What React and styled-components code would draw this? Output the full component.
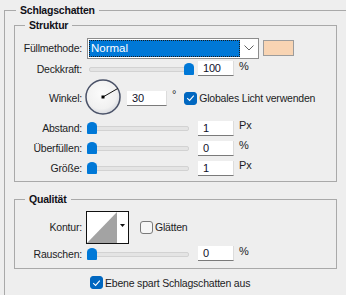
import React from "react";
import styled, { createGlobalStyle } from "styled-components";

const GlobalStyle = createGlobalStyle`
  html, body {
    margin: 0;
    padding: 0;
    background: #eeeeee;
  }
`;

const Page = styled.div`
  width: 346px;
  height: 295px;
  overflow: hidden;
  background: #eeeeee;
  padding-top: 4px;
  box-sizing: border-box;
  font-family: "Liberation Sans", Arial, sans-serif;
  font-size: 10.5px;
  letter-spacing: -0.2px;
  color: #1c1c24;
`;

const Outer = styled.fieldset`
  margin: 0 0 0 4px;
  padding: 1px 0 30px 9px;
  width: 400px;
  min-width: 0;
  box-sizing: border-box;
  border: 1px solid #a9a9a9;
`;

const Legend = styled.legend`
  margin-left: ${({ $offset }) => $offset}px;
  padding: 0 4px;
  font-weight: bold;
  font-size: 10.5px;
  line-height: 13px;
  color: #111118;
`;

const Group = styled.fieldset`
  margin: ${({ $top }) => $top}px 0 0 0;
  padding: ${({ $pt }) => $pt}px 0 ${({ $pb }) => $pb}px 0;
  width: 323px;
  min-width: 0;
  box-sizing: border-box;
  border: 1px solid #a9a9a9;
`;

const Row = styled.div`
  display: grid;
  grid-template-columns: 67px auto;
  column-gap: 5px;
  align-items: center;
  height: ${({ $h }) => $h}px;
`;

const Label = styled.div`
  text-align: right;
  white-space: nowrap;
`;

const Controls = styled.div`
  display: flex;
  align-items: center;
  height: 100%;
`;

const Select = styled.div`
  width: 172px;
  height: 21px;
  box-sizing: border-box;
  border: 1px solid #8c8c8c;
  background: #ffffff;
  padding: 1px;
  display: flex;
`;

const Highlight = styled.div`
  width: 151px;
  background: #0078d7;
  outline: 1px dotted #1a1a1a;
  outline-offset: -1px;
  color: #ffffff;
  font-size: 11.5px;
  letter-spacing: 0;
  display: flex;
  align-items: center;
  padding-left: 2px;
  box-sizing: border-box;
`;

const Chevron = styled.div`
  flex: 1;
  display: flex;
  align-items: center;
  justify-content: center;
`;

const Swatch = styled.div`
  width: 31px;
  height: 16px;
  box-sizing: border-box;
  margin-left: 4px;
  background: #f8d4b3;
  border: 1px solid #9c9c9c;
`;

const SliderBox = styled.div`
  position: relative;
  width: 106px;
  height: 14px;
  flex: none;
`;

const Groove = styled.div`
  position: absolute;
  left: 2px;
  right: 4px;
  top: 5px;
  height: 3px;
  background: #e4e4e4;
  border: 1px solid #d2d2d2;
  border-radius: 2px;
`;

const Thumb = styled.div`
  position: absolute;
  top: 1px;
  width: 10px;
  height: 12px;
  background: #0078d7;
  border-radius: 5px 5px 1px 1px / 4px 4px 1px 1px;
`;

const Field = styled.div`
  width: ${({ $w }) => $w}px;
  height: 15px;
  margin-left: ${({ $ml }) => $ml}px;
  box-sizing: border-box;
  background: #ffffff;
  border-bottom: 1px solid #7a7a7a;
  border-right: 1px solid #dcdcdc;
  padding-left: 5px;
  display: flex;
  align-items: center;
  color: #10102a;
  font-size: 11px;
  flex: none;
`;

const Unit = styled.div`
  margin-left: ${({ $ml }) => $ml ?? 5}px;
  align-self: flex-start;
  margin-top: ${({ $mt }) => $mt ?? 1}px;
  font-size: 11px;
`;

const Check = styled.div`
  width: 13px;
  height: 13px;
  box-sizing: border-box;
  border-radius: 3px;
  flex: none;
  display: flex;
  align-items: center;
  justify-content: center;
  background: ${({ $on }) => ($on ? "#0067c0" : "#f6f6f6")};
  border: 1px solid ${({ $on }) => ($on ? "#0067c0" : "#7a7a7a")};
`;

const CheckText = styled.span`
  margin-left: 2px;
  white-space: nowrap;
`;

const CheckLine = styled.div`
  display: flex;
  align-items: center;
  margin-left: ${({ $ml }) => $ml}px;
  margin-top: ${({ $mt }) => $mt ?? 0}px;
`;

const KonturBox = styled.div`
  width: 43px;
  height: 33px;
  box-sizing: border-box;
  border: 1px solid #111111;
  background: #ffffff;
  display: flex;
  margin-left: -1px;
`;

const KonturArrow = styled.div`
  flex: 1;
  display: flex;
  align-items: center;
  justify-content: center;
  padding-bottom: 4px;
`;

const Tick = () => (
  <svg width="9" height="8" viewBox="0 0 9 8">
    <path d="M1.2 4.2 L3.6 6.4 L7.8 1.6" fill="none" stroke="#ffffff" strokeWidth="1.1" />
  </svg>
);

const Checkbox = ({ on, label, ml, mt }) => (
  <CheckLine $ml={ml} $mt={mt}>
    <Check $on={on}>{on && <Tick />}</Check>
    <CheckText>{label}</CheckText>
  </CheckLine>
);

const Slider = ({ value }) => (
  <SliderBox>
    <Groove />
    <Thumb style={{ left: Math.round((value / 100) * 97) }} />
  </SliderBox>
);

const Dial = ({ angle }) => {
  const r = (angle * Math.PI) / 180;
  const x = 18 + Math.cos(r) * 17;
  const y = 18 - Math.sin(r) * 17;
  return (
    <svg width="38" height="38" viewBox="0 0 38 38" style={{ marginLeft: -2 }}>
      <defs>
        <radialGradient id="dialFill" cx="45%" cy="40%" r="60%">
          <stop offset="0%" stopColor="#fbfbfb" />
          <stop offset="75%" stopColor="#f1f1f1" />
          <stop offset="100%" stopColor="#d9dbe0" />
        </radialGradient>
      </defs>
      <circle cx="18" cy="18" r="17" fill="url(#dialFill)" stroke="#4a5268" strokeWidth="1.5" />
      <line x1="18" y1="18" x2={x} y2={y} stroke="#111" strokeWidth="1" />
      <rect x="16.5" y="16.5" width="3" height="3" fill="#000" />
    </svg>
  );
};

const SliderRow = ({ label, value, field, unit, h = 20 }) => (
  <Row $h={h}>
    <Label>{label}</Label>
    <Controls>
      <Slider value={value} />
      <Field $w={36} $ml={5}>{field}</Field>
      <Unit>{unit}</Unit>
    </Controls>
  </Row>
);

const App = () => (
  <Page>
    <GlobalStyle />
    <Outer>
      <Legend $offset={2}>Schlagschatten</Legend>

      <Group $top={1} $pt={5} $pb={3}>
        <Legend $offset={10}>Struktur</Legend>

        <Row $h={22}>
          <Label>Füllmethode:</Label>
          <Controls>
            <Select>
              <Highlight>Normal</Highlight>
              <Chevron>
                <svg width="10" height="6" viewBox="0 0 10 6">
                  <path d="M0.5 0.5 L5 5 L9.5 0.5" fill="none" stroke="#606060" strokeWidth="1" />
                </svg>
              </Chevron>
            </Select>
            <Swatch />
          </Controls>
        </Row>

        <SliderRow label="Deckkraft:" value={100} field="100" unit="%" h={19} />

        <Row $h={40}>
          <Label>Winkel:</Label>
          <Controls>
            <Dial angle={30} />
            <Field $w={40} $ml={4}>30</Field>
            <Unit $ml={5} $mt={10}>°</Unit>
            <Checkbox on label="Globales Licht verwenden" ml={8} />
          </Controls>
        </Row>

        <SliderRow label="Abstand:" value={0} field="1" unit="Px" />
        <SliderRow label="Überfüllen:" value={0} field="0" unit="%" />
        <SliderRow label="Größe:" value={0} field="1" unit="Px" />
      </Group>

      <Group $top={11} $pt={4} $pb={5}>
        <Legend $offset={10}>Qualität</Legend>

        <Row $h={34}>
          <Label>Kontur:</Label>
          <Controls>
            <KonturBox>
              <svg width="30" height="31" viewBox="0 0 30 31">
                <polygon points="0,31 30,0 30,31" fill="#a3a3a3" />
              </svg>
              <KonturArrow>
                <svg width="5" height="3" viewBox="0 0 5 3">
                  <polygon points="0,0 5,0 2.5,3" fill="#111" />
                </svg>
              </KonturArrow>
            </KonturBox>
            <Checkbox label="Glätten" ml={11} />
          </Controls>
        </Row>

        <SliderRow label="Rauschen:" value={0} field="0" unit="%" h={19} />
      </Group>

      <Checkbox on label="Ebene spart Schlagschatten aus" ml={76} mt={7} />
    </Outer>
  </Page>
);

export default App;
